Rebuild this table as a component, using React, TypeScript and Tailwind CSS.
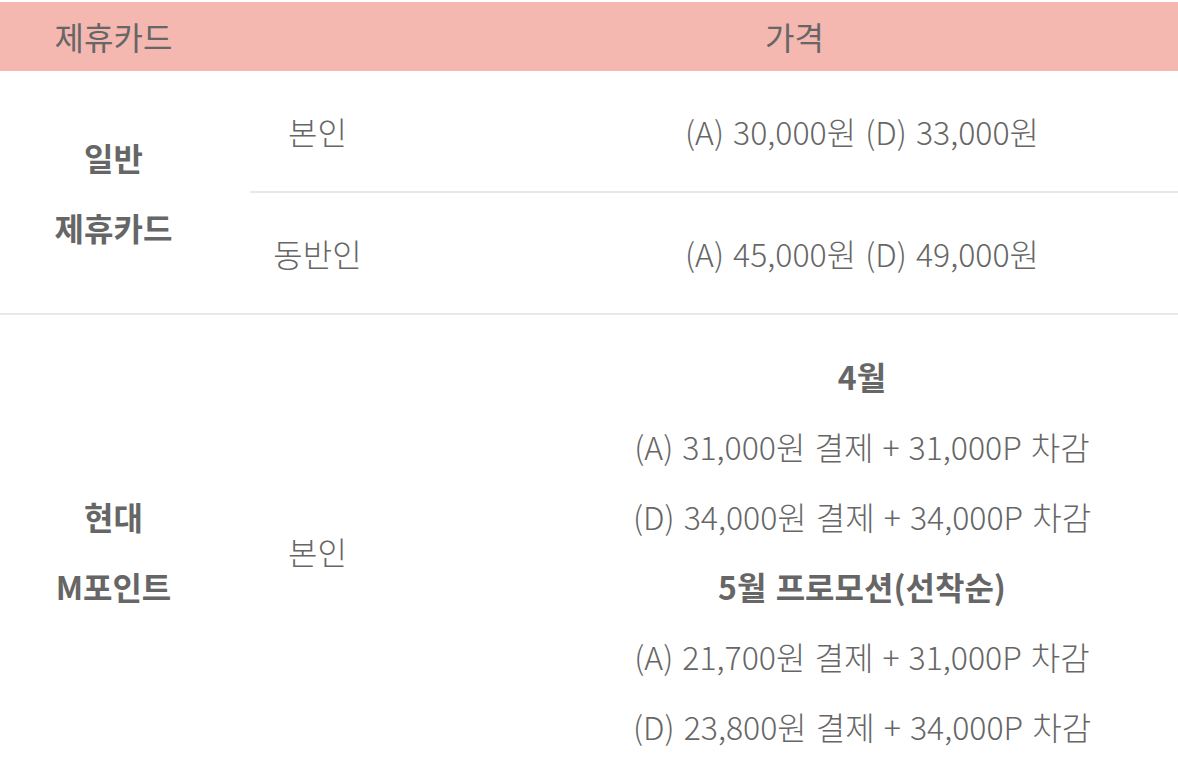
import React from "react";

const font = { fontFamily: '"Noto Sans CJK KR", "Noto Sans", sans-serif' };

export default function App() {
  return (
    <div className="w-[1178px] h-[770px] overflow-hidden bg-white pt-[2px]" style={font}>
      <table className="ml-[-23px] w-[1362px] table-fixed border-collapse text-[32px] text-[#666666] [word-spacing:2px]">
        <colgroup>
          <col className="w-[273px]" />
          <col className="w-[135px]" />
          <col className="w-[954px]" />
        </colgroup>
        <thead>
          <tr className="bg-[#f5b8b1]">
            <th className="h-[69px] p-0 text-center font-normal leading-[69px]">제휴카드</th>
            <th colSpan={2} className="h-[69px] p-0 text-center font-normal leading-[69px]">가격</th>
          </tr>
        </thead>
        <tbody>
          <tr>
            <td rowSpan={2} className="border-b-2 border-[#e8e8e8] p-0 text-center font-bold leading-[70px]">
              일반
              <br />
              제휴카드
            </td>
            <td className="border-b-2 border-[#e8e8e8] px-0 py-[25px] text-center font-light leading-[70px]">본인</td>
            <td className="border-b-2 border-[#e8e8e8] px-0 py-[25px] text-center font-light leading-[70px]">
              (A) 30,000원 (D) 33,000원
            </td>
          </tr>
          <tr>
            <td className="border-b-2 border-[#e8e8e8] px-0 py-[25px] text-center font-light leading-[70px]">동반인</td>
            <td className="border-b-2 border-[#e8e8e8] px-0 py-[25px] text-center font-light leading-[70px]">
              (A) 45,000원 (D) 49,000원
            </td>
          </tr>
          <tr>
            <td className="border-b-2 border-[#e8e8e8] p-0 text-center font-bold leading-[70px]">
              현대
              <br />
              M포인트
            </td>
            <td className="border-b-2 border-[#e8e8e8] p-0 text-center font-light leading-[70px]">본인</td>
            <td className="border-b-2 border-[#e8e8e8] px-0 py-[26px] text-center font-light leading-[70px]">
              <div className="font-bold">4월</div>
              <div>(A) 31,000원 결제 + 31,000P 차감</div>
              <div>(D) 34,000원 결제 + 34,000P 차감</div>
              <div className="font-bold">5월 프로모션(선착순)</div>
              <div>(A) 21,700원 결제 + 31,000P 차감</div>
              <div>(D) 23,800원 결제 + 34,000P 차감</div>
            </td>
          </tr>
        </tbody>
      </table>
    </div>
  );
}
